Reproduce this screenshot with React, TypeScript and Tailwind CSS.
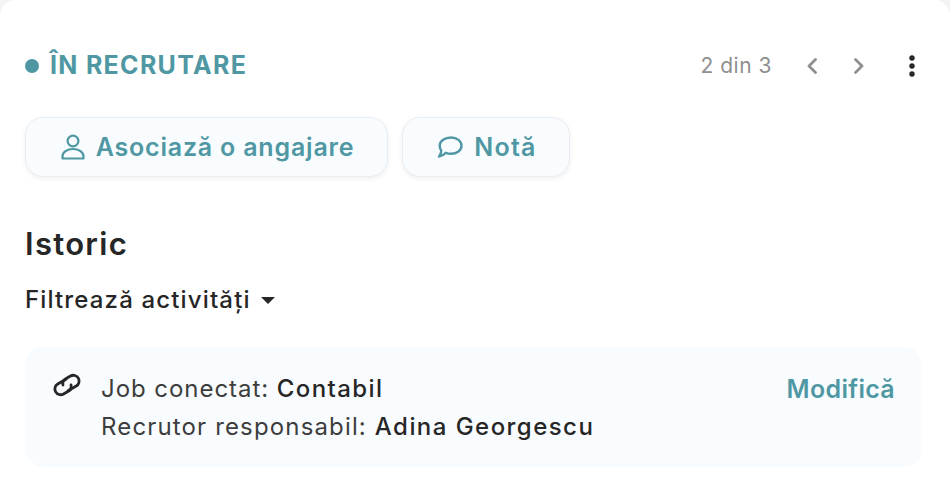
function UserIcon() {
  return (
    <svg width="24" height="26" viewBox="0 0 24 26" fill="none" stroke="#4f98a3" strokeWidth="2.2" className="shrink-0">
      <circle cx="12" cy="7" r="5.4" />
      <path d="M1.500 24.500V22.500C1.500 18 6 15 12 15S22.500 18 22.500 22.500V24.500Z" strokeLinejoin="round" />
    </svg>
  )
}

function ChatIcon() {
  return (
    <svg width="26" height="22" viewBox="0 0 26 22" fill="none" stroke="#4f98a3" strokeWidth="2.4" strokeLinejoin="round" className="shrink-0">
      <path d="M14 1.500C20 1.500 24.500 5 24.500 9.700S20 17.800 14 17.800C12 17.800 10.300 17.500 8.800 16.800C7 19 4.800 20 2 20.500C3.500 18.800 4.200 17 4.300 14.500C3 13 2.700 11.500 2.700 9.700C2.700 5 8 1.500 14 1.500Z" />
    </svg>
  )
}

function LinkIcon() {
  return (
    <svg width="30" height="24" viewBox="0 0 30 24" fill="none" stroke="#262626" strokeWidth="2.800" strokeLinecap="round" className="shrink-0">
      <g transform="translate(15 12) rotate(-30)">
        <path d="M2 -5.500H-7.500A5.750 5.750 0 0 0 -7.500 6H-2.500A5.750 5.750 0 0 0 3.500 2" />
        <path d="M-2 5.500H7.500A5.750 5.750 0 0 0 7.500 -6H2.500A5.750 5.750 0 0 0 -3.500 -2" />
      </g>
    </svg>
  )
}

function Chevron({ d }: { d: string }) {
  return (
    <svg width="10" height="16" viewBox="0 0 10 16" fill="none" stroke="#8f8f8f" strokeWidth="2.800" strokeLinecap="round" strokeLinejoin="round" className="shrink-0">
      <path d={d} />
    </svg>
  )
}

function Dots() {
  return (
    <svg width="6" height="22" viewBox="0 0 6 22" fill="#262626" className="shrink-0">
      <circle cx="3" cy="3" r="2.700" />
      <circle cx="3" cy="11" r="2.700" />
      <circle cx="3" cy="19" r="2.700" />
    </svg>
  )
}

export default function App() {
  return (
    <div className="h-[484px] w-[950px] overflow-hidden bg-[#f4f4f4] font-['Inter',sans-serif] text-[#262626]">
      <div className="h-[530px] rounded-t-[16px] bg-white pl-[25px] pr-[28px] pt-[48px]">
        <div className="flex h-[36px] items-center justify-between pr-[7px]">
          <div className="flex items-center gap-[11px]">
            <span className="h-[14px] w-[14px] rounded-full bg-[#4f98a3]" />
            <span className="text-[25px] font-bold tracking-[1.3px] text-[#4f98a3]">ÎN RECRUTARE</span>
          </div>
          <div className="flex items-center">
            <span className="mr-[35px] text-[21px] tracking-[0.5px] text-[#8f8f8f]">2 din 3</span>
            <Chevron d="M8.500 1.500 2 8l6.500 6.500" />
            <span className="w-[37px]" />
            <Chevron d="M1.500 1.500 8 8l-6.500 6.500" />
            <span className="w-[45px]" />
            <Dots />
          </div>
        </div>
        <div className="mt-[33px] flex gap-[14px]">
          <button className="flex h-[60px] w-[363px] items-center justify-center gap-[11px] rounded-[18px] border border-[#e9ecf0] bg-[#f9fcff] pl-[2px] text-[25px] font-semibold tracking-[0.8px] text-[#4f98a3] shadow-[0_2px_5px_rgba(0,0,0,0.06)]">
            <UserIcon />
            <span className="mt-[2px]">Asociază o angajare</span>
          </button>
          <button className="flex h-[60px] w-[168px] items-center justify-center gap-[11px] rounded-[18px] border border-[#e9ecf0] bg-[#f9fcff] pl-[2px] text-[25px] font-semibold tracking-[1.2px] text-[#4f98a3] shadow-[0_2px_5px_rgba(0,0,0,0.06)]">
            <ChatIcon />
            <span className="mt-[2px]">Notă</span>
          </button>
        </div>
        <h2 className="mt-[47px] text-[31px] leading-[40px] font-semibold tracking-[1.3px]">Istoric</h2>
        <div className="mt-[20px] flex items-center gap-[10px] text-[24px] leading-[32px] font-medium tracking-[1.15px]">
          Filtrează activități
          <span className="h-0 w-0 border-x-[7px] border-t-[7px] border-x-transparent border-t-[#262626]" />
        </div>
        <div className="mt-[31px] flex h-[120px] items-start rounded-[18px] bg-[#f9fcff] pl-[27px] pr-[27px] pt-[23px]">
          <div className="mt-[3px]">
            <LinkIcon />
          </div>
          <div className="ml-[19px] flex-1 text-[24px] leading-[38px] tracking-[1.15px] text-[#3d3d3d]">
            <div><span className="tracking-[0.95px]">Job conectat: </span><span className="font-medium tracking-[1.4px] text-[#262626]">Contabil</span></div>
            <div>Recrutor responsabil: <span className="font-medium tracking-[1.45px] text-[#262626]">Adina Georgescu</span></div>
          </div>
          <span className="text-[25px] leading-[38px] font-semibold tracking-[0.3px] text-[#4f98a3]">Modifică</span>
        </div>
      </div>
    </div>
  )
}
